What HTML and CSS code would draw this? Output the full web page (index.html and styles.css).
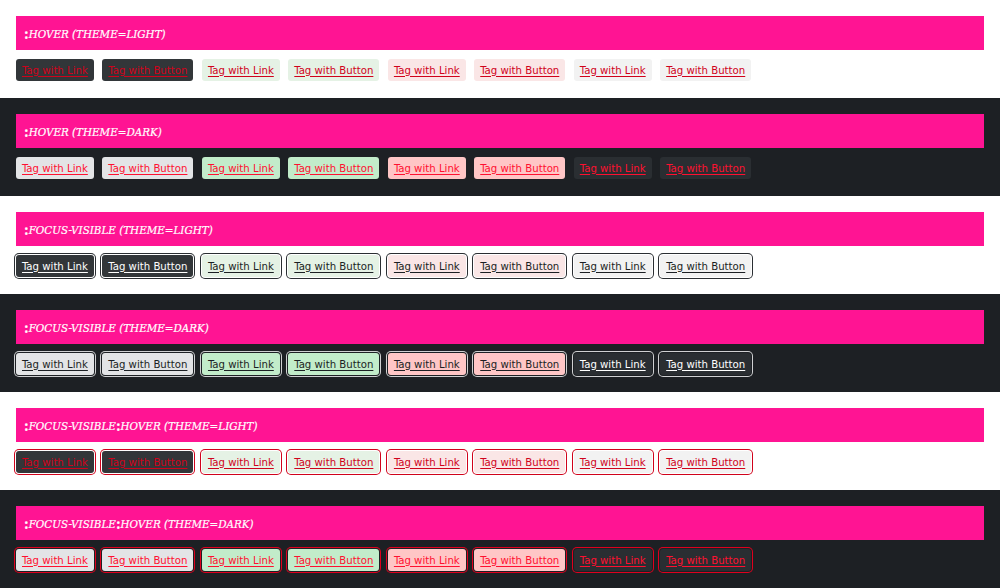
FILE: index.html
```html
<!DOCTYPE html>
<html>
<head>
<meta charset="utf-8">
<link rel="stylesheet" href="styles.css">
</head>
<body>
<section class="sec light hover">
  <h2 class="title"><b>:</b>hover (theme=light)</h2>
  <div class="tags">
    <a class="tag t-neutral">Tag with Link</a><a class="tag t-neutral">Tag with Button</a>
    <a class="tag t-green">Tag with Link</a><a class="tag t-green">Tag with Button</a>
    <a class="tag t-red">Tag with Link</a><a class="tag t-red">Tag with Button</a>
    <a class="tag t-default">Tag with Link</a><a class="tag t-default">Tag with Button</a>
  </div>
</section>
<section class="sec dark hover">
  <h2 class="title"><b>:</b>hover (theme=dark)</h2>
  <div class="tags">
    <a class="tag t-neutral">Tag with Link</a><a class="tag t-neutral">Tag with Button</a>
    <a class="tag t-green">Tag with Link</a><a class="tag t-green">Tag with Button</a>
    <a class="tag t-red">Tag with Link</a><a class="tag t-red">Tag with Button</a>
    <a class="tag t-default">Tag with Link</a><a class="tag t-default">Tag with Button</a>
  </div>
</section>
<section class="sec light focus">
  <h2 class="title"><b>:</b>focus-visible (theme=light)</h2>
  <div class="tags">
    <a class="tag t-neutral">Tag with Link</a><a class="tag t-neutral">Tag with Button</a>
    <a class="tag t-green">Tag with Link</a><a class="tag t-green">Tag with Button</a>
    <a class="tag t-red">Tag with Link</a><a class="tag t-red">Tag with Button</a>
    <a class="tag t-default">Tag with Link</a><a class="tag t-default">Tag with Button</a>
  </div>
</section>
<section class="sec dark focus">
  <h2 class="title"><b>:</b>focus-visible (theme=dark)</h2>
  <div class="tags">
    <a class="tag t-neutral">Tag with Link</a><a class="tag t-neutral">Tag with Button</a>
    <a class="tag t-green">Tag with Link</a><a class="tag t-green">Tag with Button</a>
    <a class="tag t-red">Tag with Link</a><a class="tag t-red">Tag with Button</a>
    <a class="tag t-default">Tag with Link</a><a class="tag t-default">Tag with Button</a>
  </div>
</section>
<section class="sec light focus hover">
  <h2 class="title"><b>:</b>focus-visible<b>:</b>hover (theme=light)</h2>
  <div class="tags">
    <a class="tag t-neutral">Tag with Link</a><a class="tag t-neutral">Tag with Button</a>
    <a class="tag t-green">Tag with Link</a><a class="tag t-green">Tag with Button</a>
    <a class="tag t-red">Tag with Link</a><a class="tag t-red">Tag with Button</a>
    <a class="tag t-default">Tag with Link</a><a class="tag t-default">Tag with Button</a>
  </div>
</section>
<section class="sec dark focus hover">
  <h2 class="title"><b>:</b>focus-visible<b>:</b>hover (theme=dark)</h2>
  <div class="tags">
    <a class="tag t-neutral">Tag with Link</a><a class="tag t-neutral">Tag with Button</a>
    <a class="tag t-green">Tag with Link</a><a class="tag t-green">Tag with Button</a>
    <a class="tag t-red">Tag with Link</a><a class="tag t-red">Tag with Button</a>
    <a class="tag t-default">Tag with Link</a><a class="tag t-default">Tag with Button</a>
  </div>
</section>
</body>
</html>
```
FILE: styles.css
```css
html, body {
  margin: 0;
  padding: 0;
}
body {
  width: 1000px;
  height: 588px;
  overflow: hidden;
  font-family: "DejaVu Sans Condensed", "DejaVu Sans", sans-serif;
}
.sec {
  display: flex;
  flex-direction: column;
  gap: 9px;
  height: 98px;
  box-sizing: border-box;
  padding: 16px 16px 0;
}
.sec.light { background: #ffffff; }
.sec.dark { background: #1d2024; }
.title {
  margin: 0;
  height: 34px;
  display: flex;
  align-items: center;
  padding-left: 8px;
  background: #ff1493;
  color: #ffffff;
  font-family: "DejaVu Serif Condensed", "DejaVu Serif", serif;
  font-style: italic;
  text-transform: uppercase;
  font-weight: normal;
  font-size: 11.5px;
  letter-spacing: 0;
  padding-top: 2px;
  box-sizing: border-box;
  -webkit-text-stroke: 0.2px #ffffff;
}
.title b {
  font-weight: bold;
  font-style: normal;
  font-size: 14px;
}
.tags {
  display: flex;
  gap: 8.5px;
}
.tag {
  display: inline-flex;
  align-items: center;
  height: 22px;
  box-sizing: border-box;
  padding: 0 6px;
  border-radius: 3px;
  font-size: 11.3px;
  text-decoration: underline;
  text-underline-offset: 2px;
}
/* light theme backgrounds */
.light .t-neutral { background: #323639; color: #ffffff; }
.light .t-green { background: #e5f2e5; color: #1b1f23; }
.light .t-red { background: #fae6e6; color: #1b1f23; }
.light .t-default { background: #f2f2f2; color: #1b1f23; }
/* dark theme backgrounds */
.dark .t-neutral { background: #e3e4e6; color: #1b1f23; }
.dark .t-green { background: #c2ecca; color: #1b1f23; }
.dark .t-red { background: #ffc6c6; color: #1b1f23; }
.dark .t-default { background: #2a2e32; color: #ffffff; }

/* hover text */
.light.hover .tag { color: #d0021b; }
.dark.hover .tag { color: #ff1030; }

/* focus rings */
.light.focus .tag { box-shadow: 0 0 0 1px #ffffff, 0 0 0 2px #2a2e32; }
.dark.focus .tag { box-shadow: 0 0 0 1px #1d2024, 0 0 0 2px #cfd0d2; }
.light.focus.hover .tag { box-shadow: 0 0 0 1px #ffffff, 0 0 0 2px #d0021b; }
.dark.focus.hover .tag { box-shadow: 0 0 0 1px #1d2024, 0 0 0 2px #e0001e; }
```
